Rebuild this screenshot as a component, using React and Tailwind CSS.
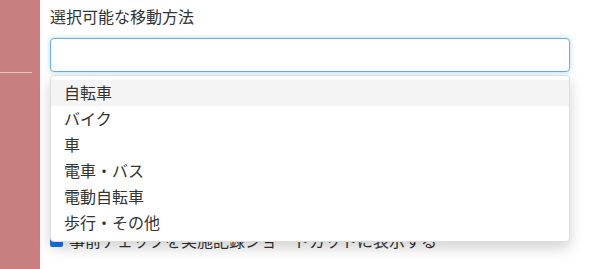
import React from 'react';

const options = ['自転車', 'バイク', '車', '電車・バス', '電動自転車', '歩行・その他'];

export default function App() {
  return (
    <div
      className="flex h-[269px] w-[615px] overflow-hidden bg-white text-[#333]"
      style={{ fontFamily: '"Noto Sans CJK JP", "Noto Sans", sans-serif' }}
    >
      {/* Sidebar */}
      <div className="w-[40px] shrink-0 bg-[#c77f7f] pt-[72px]">
        <div className="h-px w-[32px] bg-[#e8c4c4]" />
      </div>

      {/* Main */}
      <div className="relative flex-1 pl-[10px] pr-[45px]">
        <div className="pt-[5px] text-[16px] leading-[22px]">選択可能な移動方法</div>
        <div className="mt-[11px] h-[34px] rounded-[4px] border border-[#66afe9] bg-white shadow-[0_0_5px_rgba(102,175,233,0.5)]" />

        <div className="mt-[158px] flex items-center gap-[6px] text-[16px] leading-[20px]">
          <span className="inline-block h-[13px] w-[13px] rounded-[2px] bg-[#1a73e8]" />
          <span>事前チェックを実施記録ショートカットに表示する</span>
        </div>

        {/* Dropdown */}
        <div className="absolute left-[10px] right-[45px] top-[75px] rounded-[4px] border border-[#ddd] bg-white pb-[5px] pt-[4px] shadow-[0_6px_14px_rgba(0,0,0,0.18)]">
          {options.map((o, i) => (
            <div
              key={o}
              className={`flex h-[26px] items-center px-[13px] pb-[2px] text-[16px] ${i === 0 ? 'bg-[#f4f4f4]' : ''}`}
            >
              {o}
            </div>
          ))}
        </div>
      </div>
    </div>
  );
}
